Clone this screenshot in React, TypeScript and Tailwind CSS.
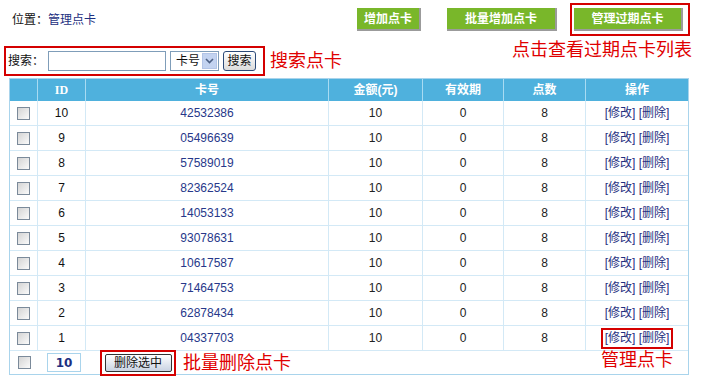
import React from 'react';

const rows = [
  { id: 10, card: '42532386' },
  { id: 9, card: '05496639' },
  { id: 8, card: '57589019' },
  { id: 7, card: '82362524' },
  { id: 6, card: '14053133' },
  { id: 5, card: '93078631' },
  { id: 4, card: '10617587' },
  { id: 3, card: '71464753' },
  { id: 2, card: '62878434' },
  { id: 1, card: '04337703' },
];

const font = "font-['Liberation_Sans','Noto_Sans_CJK_SC',sans-serif]";
const cols = 'grid grid-cols-[28px_48px_243px_94px_81px_82px_102px]';

const Check = () => (
  <div className="w-[13px] h-[13px] border border-[#7b8a9a] bg-gradient-to-br from-[#d4d4d4] to-[#fbfbfb]" />
);

const GreenButton: React.FC<{ label: string; width: string }> = ({ label, width }) => (
  <button
    className={`${width} h-[23px] bg-[#79b72a] text-white text-[12px] font-bold border-r-2 border-b-2 border-[#9b9b9b] flex items-center justify-center`}
  >
    {label}
  </button>
);

const App: React.FC = () => {
  return (
    <div className={`w-[707px] h-[377px] bg-white overflow-hidden ${font} text-[12px] text-[#222]`}>
      {/* top bar */}
      <div className="h-[39px] flex items-center pl-[12px] pr-[17px]">
        <span className="text-[#111]">
          位置：<span className="text-[#1d3081]">管理点卡</span>
        </span>
        <div className="ml-auto flex items-center">
          <GreenButton label="增加点卡" width="w-[64px]" />
          <div className="ml-[26px]">
            <GreenButton label="批量增加点卡" width="w-[110px]" />
          </div>
          <div className="ml-[13px] w-[120px] h-[33px] border-2 border-[#d40000] flex items-center pl-[2px]">
            <GreenButton label="管理过期点卡" width="w-[109px]" />
          </div>
        </div>
      </div>

      {/* search row */}
      <div className="h-[39px] flex items-start justify-between pl-[4px] pr-[15px]">
        <div className="mt-[7px] flex items-center">
          <div className="w-[261px] h-[30px] border-2 border-[#d40000] flex items-center pl-[2px]">
            <span className="text-[#111]">搜索：</span>
            <input className="ml-[4px] w-[118px] h-[20px] border border-[#7f9db9] bg-white" />
            <div className="ml-[4px] w-[49px] h-[20px] border border-[#7f9db9] bg-white flex items-center pl-[5px]">
              <span className="text-[#111]">卡号</span>
              <div className="ml-auto mr-[1px] w-[15px] h-[16px] bg-[#c3d3f0] border border-[#b2c4e6] flex items-center justify-center">
                <svg width="9" height="6" viewBox="0 0 9 6">
                  <path d="M1 1 L4.5 4.5 L8 1" stroke="#4d6185" strokeWidth="1.6" fill="none" />
                </svg>
              </div>
            </div>
            <button className="ml-[4px] w-[33px] h-[20px] border border-[#2c4a78] rounded-[3px] bg-gradient-to-b from-white to-[#dcdcdc] text-[12px] text-[#111] flex items-center justify-center">
              搜索
            </button>
          </div>
          <span className="ml-[5px] text-[18px] leading-[18px] text-[#e00000]">搜索点卡</span>
        </div>
        <span className="mt-[2px] text-[18px] leading-[18px] text-[#e00000]">点击查看过期点卡列表</span>
      </div>

      {/* table */}
      <div className="ml-[9px] w-[680px] border border-[#a9d4ec]">
        <div className={`${cols} h-[22px] bg-[#4fb1dd] text-white font-bold`}>
          <div className="border-r border-[#a8dbf2]" />
          <div className="border-r border-[#a8dbf2] flex items-center justify-center font-['Liberation_Serif',serif]">ID</div>
          <div className="border-r border-[#a8dbf2] flex items-center justify-center">卡号</div>
          <div className="border-r border-[#a8dbf2] flex items-center justify-center">金额(元)</div>
          <div className="border-r border-[#a8dbf2] flex items-center justify-center">有效期</div>
          <div className="border-r border-[#a8dbf2] flex items-center justify-center">点数</div>
          <div className="flex items-center justify-center">操作</div>
        </div>

        {rows.map((r, i) => (
          <div key={r.id} className={`${cols} h-[25px] border-b border-[#d3e9f6]`}>
            <div className="border-r border-[#d3e9f6] flex items-center justify-center">
              <Check />
            </div>
            <div className="border-r border-[#d3e9f6] flex items-center justify-center text-[#111]">{r.id}</div>
            <div className="border-r border-[#d3e9f6] flex items-center justify-center text-[#27388a]">{r.card}</div>
            <div className="border-r border-[#d3e9f6] flex items-center justify-center">10</div>
            <div className="border-r border-[#d3e9f6] flex items-center justify-center">0</div>
            <div className="border-r border-[#d3e9f6] flex items-center justify-center">8</div>
            <div className="flex items-center justify-center">
              <span
                className={`text-[#1f2f7f] px-[2px] ${
                  i === rows.length - 1 ? 'border-2 border-[#d40000] h-[21px] flex items-center' : ''
                }`}
              >
                [修改] [删除]
              </span>
            </div>
          </div>
        ))}

        {/* footer */}
        <div className="h-[23px] flex items-center">
          <div className="w-[28px] flex justify-center">
            <Check />
          </div>
          <div className="ml-[9px] w-[34px] h-[19px] border border-[#a9d4ec] flex items-center justify-center text-[#1d3081] font-bold font-['DejaVu_Sans',sans-serif] text-[12px]">
            10
          </div>
          <div className="ml-[19px] w-[76px] h-[26px] border-2 border-[#d40000] flex items-center justify-center">
            <button className="w-[67px] h-[18px] border border-[#333] rounded-[2px] bg-gradient-to-b from-white to-[#c9d3e3] text-[12px] text-[#111] flex items-center justify-center">
              删除选中
            </button>
          </div>
          <span className="ml-[7px] text-[18px] leading-[18px] text-[#e00000]">批量删除点卡</span>
          <span className="ml-auto mr-[15px] -mt-[6px] text-[18px] leading-[18px] text-[#e00000]">管理点卡</span>
        </div>
      </div>
    </div>
  );
};

export default App;
